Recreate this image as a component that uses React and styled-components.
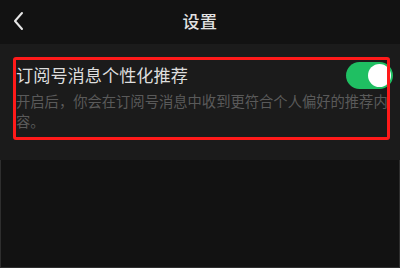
import React from 'react'
import styled, { createGlobalStyle } from 'styled-components'

const Global = createGlobalStyle`
  html, body {
    margin: 0;
    padding: 0;
    background: #121212;
  }
  * {
    box-sizing: border-box;
  }
`

const Screen = styled.div`
  position: relative;
  width: 400px;
  height: 268px;
  background: #121212;
  font-family: "Noto Sans CJK SC", "Noto Sans", sans-serif;
  box-shadow: inset 1px 0 0 #2e2e2e, inset -1px 0 0 #2e2e2e, inset 0 -1px 0 #2e2e2e;
  overflow: hidden;
`

const NavBar = styled.div`
  position: relative;
  height: 44px;
  display: flex;
  align-items: center;
  justify-content: center;
  background: #121212;
`

const BackButton = styled.div`
  position: absolute;
  left: 11px;
  top: 11px;
  width: 16px;
  height: 20px;
  display: flex;
`

const Title = styled.div`
  font-size: 17px;
  font-weight: 500;
  color: #e2e2e2;
  letter-spacing: 0.5px;
  margin-top: -4px;
`

const Card = styled.div`
  background: #1b1b1b;
  padding: 17px 7px 29px 16px;
`

const Row = styled.div`
  display: flex;
  align-items: center;
  justify-content: space-between;
  height: 28px;
`

const Label = styled.div`
  font-size: 17.2px;
  color: #dedede;
  line-height: 24px;
`

const Switch = styled.div`
  width: 47px;
  height: 27px;
  border-radius: 14px;
  background: ${p => (p.$on ? '#1fbf62' : '#444')};
  display: flex;
  align-items: center;
  justify-content: ${p => (p.$on ? 'flex-end' : 'flex-start')};
  padding: 2px;
`

const Knob = styled.div`
  width: 23px;
  height: 23px;
  border-radius: 50%;
  background: #ffffff;
`

const Desc = styled.div`
  margin-top: 2px;
  font-size: 14.3px;
  line-height: 20px;
  color: #5a5a5a;
`

const Highlight = styled.div`
  position: absolute;
  left: 13px;
  top: 57px;
  width: 377px;
  height: 83px;
  border: 3px solid #ff1a1a;
  border-radius: 3px;
  pointer-events: none;
`

export default function App() {
  return (
    <>
      <Global />
      <Screen>
        <NavBar>
          <BackButton>
            <svg width="16" height="20" viewBox="0 0 16 20">
              <path d="M11 2 L4 10 L11 18" fill="none" stroke="#e6e6e6" strokeWidth="2" strokeLinecap="round" strokeLinejoin="round" />
            </svg>
          </BackButton>
          <Title>设置</Title>
        </NavBar>
        <Card>
          <Row>
            <Label>订阅号消息个性化推荐</Label>
            <Switch $on>
              <Knob />
            </Switch>
          </Row>
          <Desc>开启后，你会在订阅号消息中收到更符合个人偏好的推荐内容。</Desc>
        </Card>
        <Highlight />
      </Screen>
    </>
  )
}
